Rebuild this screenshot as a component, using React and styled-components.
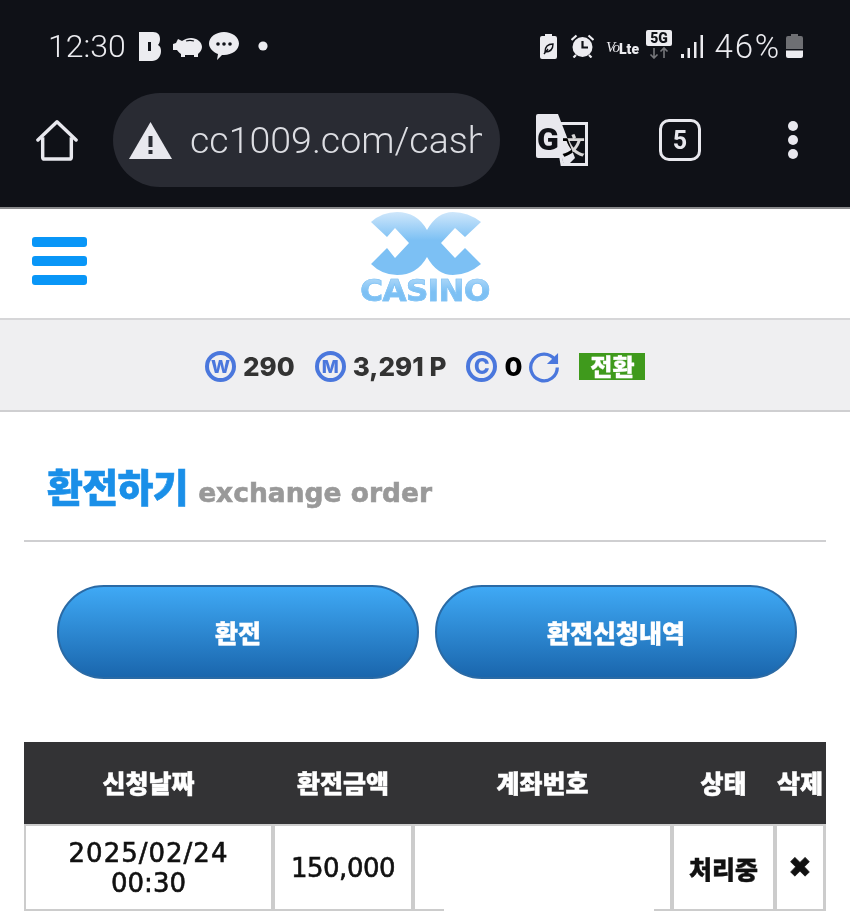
import React from 'react';
import styled, {createGlobalStyle} from 'styled-components';

const Global = createGlobalStyle`
  html, body {
    margin: 0;
    padding: 0;
    background: #fff;
    overflow: hidden;
  }
  * {
    box-sizing: border-box;
  }
`;

const KR = `"Noto Sans CJK KR", "Noto Sans", sans-serif`;

const Page = styled.div`
  width: 850px;
  height: 911px;
  overflow: hidden;
  font-family: ${KR};
`;

const Chrome = styled.div`
  height: 209px;
  background: #0f1117;
  border-bottom: 2px solid #8a8a8c;
`;

const StatusBar = styled.div`
  height: 93px;
  padding: 28px 47px 0 48px;
  display: flex;
  align-items: flex-start;
  justify-content: space-between;
  color: #ececf0;
  font-family: Roboto, sans-serif;
`;

const StatusSide = styled.div`
  display: flex;
  align-items: center;
  height: 36px;
`;

const Clock = styled.span`
  font-size: 32px;
  font-weight: 300;
  margin-right: 13px;
`;

const Percent = styled.span`
  font-size: 33px;
  font-weight: 300;
  letter-spacing: 1.8px;
  margin: 0 5px 0 12px;
`;

const Toolbar = styled.div`
  height: 114px;
  padding: 0 47px 20px 36px;
  display: flex;
  align-items: center;
`;

const UrlBar = styled.div`
  width: 387px;
  height: 94px;
  margin: 0 36px 0 35px;
  padding: 0 18px 0 16px;
  border-radius: 47px;
  background: #292b33;
  display: flex;
  align-items: center;
  gap: 18px;
`;

const UrlText = styled.div`
  flex: 1;
  overflow: hidden;
  white-space: nowrap;
  color: #dcdde2;
  font-family: Roboto, sans-serif;
  font-size: 37.5px;
  font-weight: 300;
`;

const TabCount = styled.div`
  width: 42px;
  height: 42px;
  margin: 0 87px 0 71px;
  border: 3px solid #e8e8ee;
  border-radius: 10px;
  color: #e8e8ee;
  display: flex;
  align-items: center;
  justify-content: center;
  font-family: Roboto, sans-serif;
  font-size: 25px;
  font-weight: 700;
`;

const MoreDots = styled.div`
  display: flex;
  flex-direction: column;
  gap: 4px;
`;

const Dot = styled.span`
  width: 10px;
  height: 10px;
  border-radius: 50%;
  background: #e8e8ee;
`;

const Header = styled.header`
  height: 111px;
  border-bottom: 2px solid #d6d6d8;
  padding: 3px 32px 0;
  display: grid;
  grid-template-columns: 1fr auto 1fr;
  align-items: start;
`;

const Burger = styled.div`
  margin-top: 25px;
  width: 55px;
  display: flex;
  flex-direction: column;
  gap: 9px;
`;

const BurgerBar = styled.span`
  height: 10px;
  border-radius: 3px;
  background: #0996f7;
`;

const Logo = styled.div`
  display: flex;
  flex-direction: column;
  align-items: center;
`;

const LogoText = styled.span`
  color: transparent;
  background: linear-gradient(#b4dbf9, #7cc0f4 55%);
  -webkit-background-clip: text;
  background-clip: text;
  -webkit-text-stroke: 0.7px #86c5f5;
  font-family: "DejaVu Sans", sans-serif;
  font-size: 31px;
  font-weight: 700;
  letter-spacing: -0.6px;
  line-height: 29px;
`;

const BalanceBar = styled.div`
  height: 92px;
  background: #efeff1;
  border-bottom: 2px solid #cfcfd1;
  padding: 3px 0 0 205px;
  display: flex;
  align-items: center;
  color: #333;
  font-family: Inter, sans-serif;
  font-size: 26px;
  font-weight: 800;
`;

const CoinMark = styled.span`
  width: 31px;
  height: 31px;
  margin-right: ${p => p.$gap}px;
  border: 4px solid #4a77dd;
  border-radius: 50%;
  color: #4a77dd;
  display: flex;
  align-items: center;
  justify-content: center;
  font-size: ${p => p.$size || 17}px;
  font-weight: 800;
`;

const Amount = styled.span`
  margin-right: ${p => p.$gap}px;
  color: ${p => p.$color || '#333'};
`;

const ConvertBadge = styled.span`
  width: 66px;
  height: 27px;
  margin-left: 19px;
  background: #3f9a1c;
  color: #fff;
  font-family: ${KR};
  font-size: 24px;
  font-weight: 900;
  line-height: 26px;
  text-align: center;
  -webkit-text-stroke: 0.3px #fff;
`;

const TitleRow = styled.div`
  height: 130px;
  margin: 0 24px;
  padding: 45px 0 0 23px;
  border-bottom: 2px solid #cfcfd1;
  display: flex;
  align-items: flex-start;
  gap: 10px;
`;

const TitleMain = styled.h1`
  margin: 0;
  color: #1a8fe8;
  font-size: 39px;
  font-weight: 900;
  line-height: 57px;
  letter-spacing: -0.6px;
  -webkit-text-stroke: 0.6px #1a8fe8;
`;

const TitleSub = styled.span`
  color: #999;
  font-family: "DejaVu Sans", sans-serif;
  font-size: 26.5px;
  font-weight: 700;
  line-height: 72px;
  -webkit-text-stroke: 0.6px #999;
`;

const Buttons = styled.div`
  margin-top: 43px;
  padding: 0 53px 0 57px;
  display: flex;
  gap: 16px;
`;

const PillButton = styled.button`
  flex: 1;
  height: 94px;
  border: 2px solid #2a6aa5;
  border-radius: 47px;
  background: linear-gradient(#3fa9f5, #1a66ad);
  color: #fff;
  font-family: ${KR};
  font-size: 25px;
  font-weight: 900;
  -webkit-text-stroke: 0.4px #fff;
`;

const Table = styled.div`
  margin: 63px 24px 0;
`;

const COLUMNS = '245px 136px 255px 99px 46px';

const HeadRow = styled.div`
  height: 82px;
  padding: 0 2px 3px;
  background: #333335;
  display: grid;
  grid-template-columns: ${COLUMNS};
  column-gap: 4px;
  align-items: center;
  text-align: center;
  color: #fff;
  font-size: 25px;
  font-weight: 900;
  white-space: nowrap;
  -webkit-text-stroke: 0.5px #fff;
`;

const BodyRow = styled.div`
  height: 87px;
  padding: 2px;
  background: #cccccc;
  display: grid;
  grid-template-columns: ${COLUMNS};
  column-gap: 4px;
`;

const Cell = styled.div`
  background: #fff;
  color: #111;
  display: flex;
  flex-direction: column;
  align-items: center;
  justify-content: center;
  text-align: center;
  font-family: "DejaVu Sans", ${KR};
  font-size: 26px;
  font-weight: 500;
  line-height: 30px;
  letter-spacing: ${p => p.$track || 0}px;
  -webkit-text-stroke: 0.6px #111;
`;

const DateLine = styled.span`
  letter-spacing: 1px;
`;

const AccountCell = styled(Cell)`
  position: relative;

  &::after {
    content: '';
    position: absolute;
    left: 29px;
    right: 16px;
    bottom: -2px;
    height: 2px;
    background: #fff;
  }
`;

const StatusCell = styled(Cell)`
  font-family: ${KR};
  font-size: 25px;
  font-weight: 900;
  -webkit-text-stroke: 0.4px #111;
`;

const CloseMark = styled.span`
  font-family: "DejaVu Sans", sans-serif;
  font-size: 28px;
  font-weight: 700;
`;

const Svg = styled.svg`
  display: block;
  flex: none;
  margin: ${p => p.$m || 0};
`;

const BlendText = styled.text`
  mix-blend-mode: difference;
`;

const Refresh = () => (
  <Svg width="31" height="32" viewBox="0 0 32 32" fill="none">
    <path d="M26.700 8.600A13.700 13.700 0 1 0 29.200 16.500" stroke="#4a77dd" strokeWidth="3.4" />
    <path d="M30 1.500v11.500H18.500z" fill="#4a77dd" />
  </Svg>
);

const LogoMark = () => (
  <Svg width="112" height="64" viewBox="0 0 112 64" $m="0 0 0 1px">
    <defs>
      <linearGradient id="logoFill" x1="0" y1="0" x2="0" y2="1">
        <stop offset="0" stopColor="#cfe7fb" />
        <stop offset="0.45" stopColor="#7cc0f4" />
        <stop offset="1" stopColor="#7cc0f4" />
      </linearGradient>
    </defs>
    <path
      fill="url(#logoFill)"
      d="M1 10Q12 0 27 0Q47 0 57 18Q67 0 83 0Q98 0 111 10L95 25 85 16 71 31 85 46 95 36 111 52Q98 63 83 63Q67 63 57 45Q47 63 27 63Q12 63 1 52L17 36 25 46 39 31 25 16 17 25Z"
    />
  </Svg>
);

const TranslateIcon = () => (
  <Svg width="52" height="52" viewBox="0 0 52 52">
    <path d="M19 9.500h31.500v41H26z" fill="none" stroke="#e8e8ee" strokeWidth="3" />
    <path d="M2 0h20l17 44H2a2 2 0 0 1-2-2V2a2 2 0 0 1 2-2z" fill="#e8e8ee" />
    <path d="M26 44h13l-8 8h-3z" fill="#e8e8ee" />
    <text x="1" y="36" fontFamily="Roboto, sans-serif" fontSize="32" fontWeight="900" fill="#0f1117">G</text>
    <BlendText x="26" y="40" fontFamily='"Noto Sans CJK SC", sans-serif' fontSize="23" fontWeight="700" fill="#e8e8ee">文</BlendText>
  </Svg>
);

const HomeIcon = () => (
  <Svg width="42" height="42" viewBox="0 0 44 44" fill="none">
    <path d="M2 22 22 3l20 19" stroke="#e8e8ee" strokeWidth="3.6" strokeLinecap="round" strokeLinejoin="round" />
    <path d="M7 19v21a2 2 0 0 0 2 2h26a2 2 0 0 0 2-2V19" stroke="#e8e8ee" strokeWidth="3.6" />
  </Svg>
);

const WarningIcon = () => (
  <Svg width="43" height="37" viewBox="0 0 43 37">
    <path d="M21.500 0 43 37H0z" fill="#e8e8ee" />
    <path d="M19.500 14h4v11h-4zM19.500 28h4v4h-4z" fill="#292b33" />
  </Svg>
);

const BlogIcon = () => (
  <Svg width="22" height="29" viewBox="0 0 22 29" $m="0 12px 0 0">
    <path d="M0 0h14c5 0 7 3 7 7 0 3-1 5-2 6 2 1 3 3 3 6 0 6-4 10-9 10H0z" fill="#ececf0" />
    <path d="M9 10h3v9H9z" fill="#0f1117" />
  </Svg>
);

const PigIcon = () => (
  <Svg width="30" height="23" viewBox="0 0 30 23" $m="0 6px 0 0">
    <path d="M5 4l4 2c3-2 6-3 9-3 6 0 11 4 11 9 0 3-2 5-4 7v3h-4v-2h-9v2H8v-3c-2-1-3-3-4-4H0V9l3-1z" fill="#ececf0" />
    <path d="M13 6c3-1 5-1 8 0" stroke="#0f1117" strokeWidth="1.2" fill="none" />
  </Svg>
);

const TalkIcon = () => (
  <Svg width="30" height="28" viewBox="0 0 30 28" $m="0 19px 0 0">
    <path d="M15 0c8 0 15 5 15 11.500S23 23 15 23h-2l-5 5 1-6C4 20 0 16 0 11.500 0 5 7 0 15 0z" fill="#ececf0" />
    <circle cx="9" cy="12" r="1.8" fill="#0f1117" />
    <circle cx="15" cy="12" r="1.8" fill="#0f1117" />
    <circle cx="21" cy="12" r="1.8" fill="#0f1117" />
  </Svg>
);

const StatusDot = () => (
  <Svg width="10" height="10" viewBox="0 0 10 10">
    <circle cx="5" cy="5" r="4.6" fill="#ececf0" />
  </Svg>
);

const SaverIcon = () => (
  <Svg width="17" height="25" viewBox="0 0 17 25" $m="0 14px 0 0">
    <path d="M5 0h7v2h3a2 2 0 0 1 2 2v19a2 2 0 0 1-2 2H2a2 2 0 0 1-2-2V4a2 2 0 0 1 2-2h3z" fill="#ececf0" />
    <path d="M5 18c0-5 3-8 8-8 0 5-3 8-8 8zM4 20l4-5" stroke="#0f1117" strokeWidth="1.4" fill="none" />
  </Svg>
);

const AlarmIcon = () => (
  <Svg width="23" height="24" viewBox="0 0 23 24" $m="0 12px 0 0">
    <circle cx="11.500" cy="13" r="10" fill="#ececf0" />
    <path d="M11.500 7v6.500H17" stroke="#0f1117" strokeWidth="2.2" fill="none" />
    <path d="M0.500 6l5-4.500M22.500 6l-5-4.500M5 21l-2.500 2.500M18 21l2.500 2.500" stroke="#ececf0" strokeWidth="2.2" />
  </Svg>
);

const VolteIcon = () => (
  <Svg width="33" height="18" viewBox="0 0 33 18" $m="2px 7px 0 0">
    <text x="0" y="14" fontFamily='"Liberation Serif", serif' fontStyle="italic" fontSize="15" letterSpacing="-1" fill="#ececf0">Vo</text>
    <text x="13" y="16" fontFamily="Roboto, sans-serif" fontWeight="900" fontSize="14" fill="#ececf0">Lte</text>
  </Svg>
);

const NetworkIcon = () => (
  <Svg width="26" height="29" viewBox="0 0 26 29" $m="-3px 9px 0 0">
    <rect width="26" height="16" rx="2" fill="#ececf0" />
    <text x="13" y="13" textAnchor="middle" fontFamily="Roboto, sans-serif" fontWeight="900" fontSize="14" fill="#0f1117">5G</text>
    <path d="M8 18v10M4.500 24.500 8 28l3.500-3.500" stroke="#77787c" strokeWidth="1.6" fill="none" />
    <path d="M18 28V18M14.500 21.500 18 18l3.500 3.500" stroke="#77787c" strokeWidth="1.6" fill="none" />
  </Svg>
);

const SignalIcon = () => (
  <Svg width="22" height="23" viewBox="0 0 22 23">
    <path d="M0 19h3v4H0zM6.500 13h2.500v10H6.500zM13 7h2.500v16H13zM19.500 0H22v23h-2.500z" fill="#ececf0" />
  </Svg>
);

const BatteryIcon = () => (
  <Svg width="17" height="24" viewBox="0 0 17 24">
    <path d="M5 0h7v2h3a2 2 0 0 1 2 2v11H0V4a2 2 0 0 1 2-2h3z" fill="#6e6f73" />
    <path d="M0 16.500h17V22a2 2 0 0 1-2 2H2a2 2 0 0 1-2-2z" fill="#ececf0" />
  </Svg>
);

export default function App() {
  return (
    <Page>
      <Global />
      <Chrome>
        <StatusBar>
          <StatusSide>
            <Clock>12:30</Clock>
            <BlogIcon />
            <PigIcon />
            <TalkIcon />
            <StatusDot />
          </StatusSide>
          <StatusSide>
            <SaverIcon />
            <AlarmIcon />
            <VolteIcon />
            <NetworkIcon />
            <SignalIcon />
            <Percent>46%</Percent>
            <BatteryIcon />
          </StatusSide>
        </StatusBar>
        <Toolbar>
          <HomeIcon />
          <UrlBar>
            <WarningIcon />
            <UrlText>cc1009.com/cash</UrlText>
          </UrlBar>
          <TranslateIcon />
          <TabCount>5</TabCount>
          <MoreDots>
            <Dot />
            <Dot />
            <Dot />
          </MoreDots>
        </Toolbar>
      </Chrome>
      <Header>
        <Burger>
          <BurgerBar />
          <BurgerBar />
          <BurgerBar />
        </Burger>
        <Logo>
          <LogoMark />
          <LogoText>CASINO</LogoText>
        </Logo>
      </Header>
      <BalanceBar>
        <CoinMark $gap={7} $size={18}>W</CoinMark>
        <Amount $gap={20}>290</Amount>
        <CoinMark $gap={7} $size={18}>M</CoinMark>
        <Amount $gap={20}>3,291 P</Amount>
        <CoinMark $gap={7} $size={21}>C</CoinMark>
        <Amount $gap={7} $color="#000">0</Amount>
        <Refresh />
        <ConvertBadge>전환</ConvertBadge>
      </BalanceBar>
      <TitleRow>
        <TitleMain>환전하기</TitleMain>
        <TitleSub>exchange order</TitleSub>
      </TitleRow>
      <Buttons>
        <PillButton>환전</PillButton>
        <PillButton>환전신청내역</PillButton>
      </Buttons>
      <Table>
        <HeadRow>
          <span>신청날짜</span>
          <span>환전금액</span>
          <span>계좌번호</span>
          <span>상태</span>
          <span>삭제</span>
        </HeadRow>
        <BodyRow>
          <Cell>
            <DateLine>2025/02/24</DateLine>
            <span>00:30</span>
          </Cell>
          <Cell $track={-0.5}>150,000</Cell>
          <AccountCell />
          <StatusCell>처리중</StatusCell>
          <Cell><CloseMark>✖</CloseMark></Cell>
        </BodyRow>
      </Table>
    </Page>
  );
}
